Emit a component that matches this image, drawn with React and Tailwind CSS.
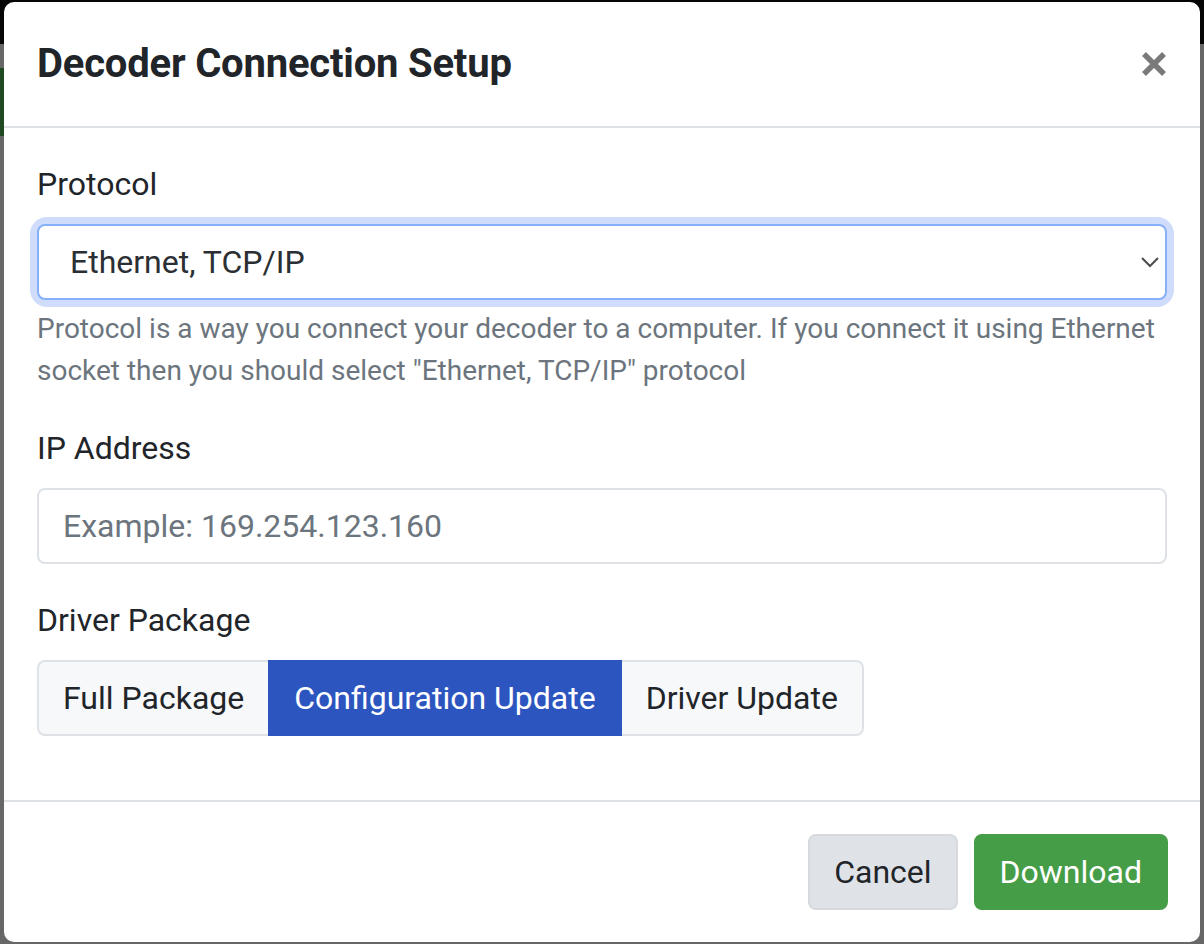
import { useState } from 'react'

const lbl = 'block text-[32px] leading-[48px] text-[#212529] mb-[16px]'
const seg = 'h-[76px] px-[24px] text-[32px] leading-[48px] border-2'

export default function App() {
  const [pkg, setPkg] = useState('config')
  const [ip, setIp] = useState('')

  const pkgs = [
    { id: 'full', label: 'Full Package' },
    { id: 'config', label: 'Configuration Update' },
    { id: 'driver', label: 'Driver Update' },
  ]

  return (
    <div className="relative w-[1204px] h-[944px] overflow-hidden bg-[#676767]" style={{ fontFamily: 'Roboto, "Liberation Sans", sans-serif' }}>
      {/* page behind the backdrop */}
      <div className="h-[44px] bg-[#060606]" />
      <div className="mt-[24px] w-[40px] h-[68px] bg-[#1f4a22]" />

      {/* modal */}
      <div className="absolute left-[4px] top-[2px] w-[1196px] h-[940px] bg-white rounded-[10px] flex flex-col">
        <div className="h-[126px] flex items-center justify-between pl-[33px] pr-[30px] border-b-2 border-[#dee2e6]">
          <h5 className="text-[40px] font-bold text-[#212529] tracking-[-0.2px]">Decoder Connection Setup</h5>
          <button className="w-[32px] h-[32px] flex items-center justify-center">
            <svg width="26" height="26" viewBox="0 0 26 26">
              <path d="M3 3 L23 23 M23 3 L3 23" stroke="#7a7a7a" strokeWidth="5.5" strokeLinecap="butt" />
            </svg>
          </button>
        </div>

        <div className="px-[33px] pt-[32px] pb-[32px] flex-1">
          <label className={lbl}>Protocol</label>
          <div className="relative rounded-[10px] ring-[7px] ring-[#cfdcfb]">
            <div className="h-[76px] rounded-[8px] border-2 border-[#86b0f8] flex items-center justify-between pl-[31px] pr-[5px] text-[32px] text-[#2b2f33]">
              <span>Ethernet, TCP/IP</span>
              <svg width="20" height="12" viewBox="0 0 20 12">
                <path d="M2 2 L10 10 L18 2" fill="none" stroke="#4a4d50" strokeWidth="2" />
              </svg>
            </div>
          </div>
          <p className="mt-[8px] text-[28px] leading-[42px] text-[#6c757d]">
            Protocol is a way you connect your decoder to a computer. If you connect it using Ethernet socket then you should select "Ethernet, TCP/IP" protocol
          </p>

          <label className={lbl + ' mt-[32px]'}>IP Address</label>
          <input
            value={ip}
            onChange={e => setIp(e.target.value)}
            placeholder="Example: 169.254.123.160"
            className="w-full h-[76px] rounded-[8px] border-2 border-[#dee2e6] px-[24px] text-[32px] text-[#212529] placeholder-[#6c757d] outline-none"
          />

          <label className={lbl + ' mt-[32px]'}>Driver Package</label>
          <div className="flex">
            {pkgs.map((p, i) => (
              <button
                key={p.id}
                onClick={() => setPkg(p.id)}
                className={
                  seg + ' ' +
                  (pkg === p.id ? 'bg-[#2c55c0] border-[#2c55c0] text-white' : 'bg-[#f7f8fa] border-[#dee2e6] text-[#212529]') +
                  (i === 0 ? ' rounded-l-[8px]' : '') +
                  (i === pkgs.length - 1 ? ' rounded-r-[8px]' : '') +
                  (i > 0 && pkg !== p.id ? ' border-l-0' : '') +
                  (i < pkgs.length - 1 && pkg !== p.id && pkgs[i + 1].id === pkg ? ' border-r-0' : '')
                }
              >
                {p.label}
              </button>
            ))}
          </div>
        </div>

        <div className="h-[142px] border-t-2 border-[#dee2e6] flex items-center justify-end gap-[16px] px-[32px]">
          <button className="h-[76px] px-[24px] rounded-[8px] bg-[#dfe3e8] border-2 border-[#d6dade] text-[32px] text-[#212529]">Cancel</button>
          <button className="h-[76px] px-[24px] rounded-[8px] bg-[#469d48] border-2 border-[#469d48] text-[32px] text-white">Download</button>
        </div>
      </div>
    </div>
  )
}
